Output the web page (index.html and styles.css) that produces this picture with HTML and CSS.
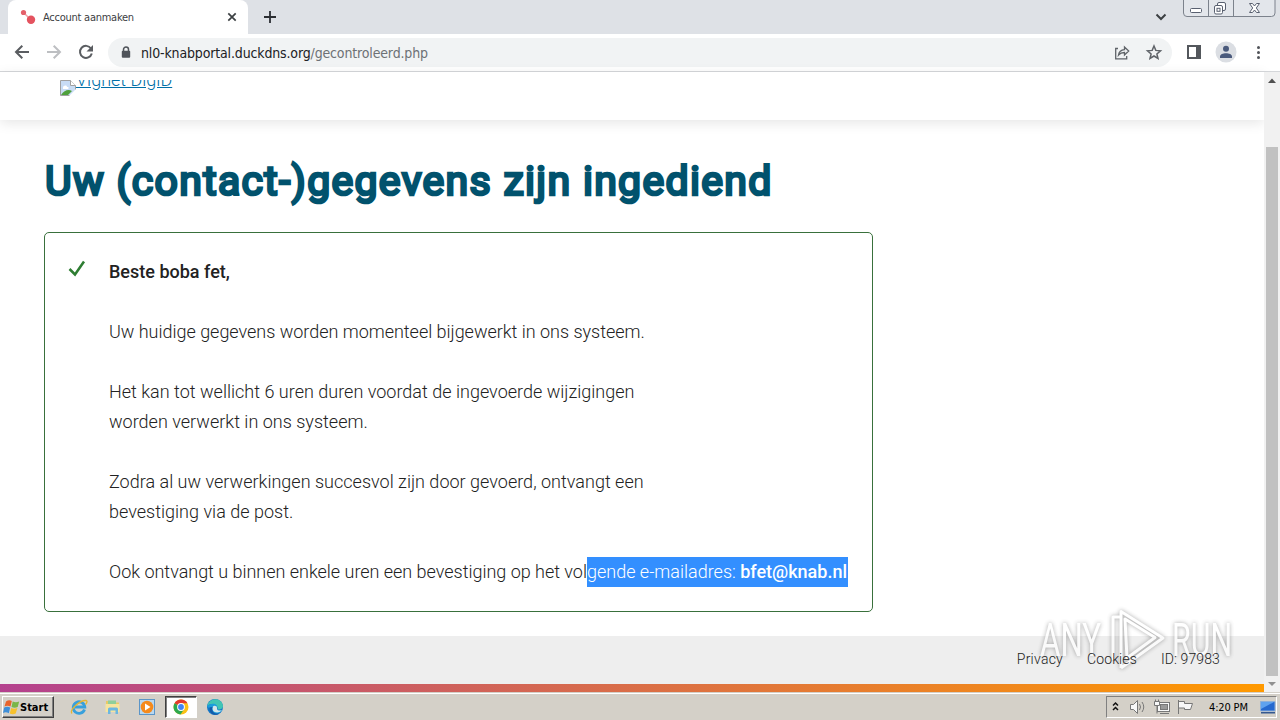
FILE: index.html
```html
<!DOCTYPE html>
<html lang="nl">
<head>
<meta charset="utf-8">
<title>Account aanmaken</title>
<link rel="stylesheet" href="styles.css">
</head>
<body>
<div class="tabstrip">
  <div class="tab">
    <svg class="favicon" width="16" height="16" viewBox="0 0 16 16"><path d="M3 3l8 8" stroke="#f0a0a6" stroke-width="1.5"/><circle cx="3.5" cy="3.5" r="2.6" fill="#e4606a"/><circle cx="11" cy="10.8" r="4.2" fill="#e4535f"/></svg>
    <span class="tab-title">Account aanmaken</span>
    <svg class="tab-close" width="10" height="10" viewBox="0 0 10 10"><path d="M1.300 1.300l7.400 7.400M8.700 1.300L1.300 8.700" stroke="#3c4043" stroke-width="1.700"/></svg>
  </div>
  <svg class="new-tab" width="12" height="12" viewBox="0 0 12 12"><path d="M6 0v12M0 6h12" stroke="#2b2e33" stroke-width="1.800"/></svg>
  <svg class="chevron" width="12" height="8" viewBox="0 0 12 8"><path d="M1.500 1.500L6 6l4.500-4.500" fill="none" stroke="#3c4043" stroke-width="2"/></svg>
  <svg class="window-buttons" width="94" height="18" viewBox="0 0 94 18"><path d="M.500 0v13q0 3.500 3.500 3.500h84.500q3.500 0 3.500-3.500V0M25.500 0v16M50.500 0v16" fill="#e3e6eb" stroke="#7c828c"/><rect x="7.500" y="8.500" width="11" height="4" rx="1" fill="#fff" stroke="#596070"/><rect x="34.500" y="2.500" width="8" height="8" rx="1.500" fill="#fff" stroke="#596070"/><rect x="31.500" y="5.500" width="8" height="8.500" rx="1.500" fill="#fff" stroke="#596070"/><rect x="34" y="8.300" width="3" height="3" fill="#fff" stroke="#596070"/><path d="M66.500 3.500h3l2 2.500 2-2.500h3l-3.200 4.500 3.200 4.500h-3l-2-2.500-2 2.500h-3l3.200-4.500z" fill="#fff" stroke="#596070"/></svg>
</div>
<div class="toolbar">
  <svg class="nav" width="104" height="37" viewBox="0 0 104 37"><g fill="none" stroke-width="2"><path d="M29 18H16.500M22.300 11.700L16 18l6.300 6.300" stroke="#5a5d61"/><path d="M47 18h12.500M53.700 11.700L60 18l-6.300 6.300" stroke="#bdbfc2"/><path d="M91 14.500a6 6 0 1 0 .800 5" stroke="#5a5d61"/></g><path d="M93 11v6.500h-6.500z" fill="#5a5d61"/></svg>
  <div class="omnibox">
    <svg width="10" height="13" viewBox="0 0 10 13"><path d="M2.500 5V3.500a2.500 2.500 0 0 1 5 0V5" fill="none" stroke="#50545a" stroke-width="1.500"/><rect x=".800" y="4.800" width="8.400" height="7" rx="1" fill="#50545a"/></svg>
    <span class="url">nl0-knabportal.duckdns.org<span class="path">/gecontroleerd.php</span></span>
    <svg class="share" width="50" height="18" viewBox="0 0 50 18"><g fill="none" stroke="#5f6368" stroke-width="1.300"><path d="M4 4.500H1.700v10.300h11V12M4.500 11c.5-3.500 2.500-5 6-5.300V3l4.200 4-4.200 4V8.500c-2.800 0-4.500.7-6 2.500z"/><path d="M40 2l1.800 4.400 4.700.4-3.600 3.100 1.100 4.600-4-2.500-4 2.500 1.100-4.600-3.600-3.100 4.700-.4z" stroke-width="1.500"/></g></svg>
  </div>
  <svg class="tools" width="92" height="37" viewBox="0 0 92 37"><rect x="2" y="12" width="12" height="12" fill="none" stroke="#53575c" stroke-width="2"/><path d="M10 11h5v14h-5z" fill="#53575c"/><circle cx="40" cy="18" r="10.500" fill="#dbdee3"/><circle cx="40" cy="14.700" r="3" fill="#4a5a7c"/><path d="M34 24v-1.500c0-4.500 12-4.500 12 0V24z" fill="#4a5a7c"/><g fill="#505358"><circle cx="72.500" cy="13.500" r="1.500"/><circle cx="72.500" cy="18.500" r="1.500"/><circle cx="72.500" cy="23.500" r="1.500"/></g></svg>
</div>
<div class="viewport">
  <div class="page">
    <header class="site-header">
      <a class="vignet"><svg width="16" height="16" viewBox="0 0 16 16"><path d="M.500.500h10l5 5v10H.500z" fill="#c8dcf5" stroke="#a0a0a0"/><path d="M10.500.500v5h5" fill="#fff" stroke="#a0a0a0"/><path d="M3 8c0-3 4-3 4-1 2-.5 2.500 2 0 2H3z" fill="#fff"/><path d="M1 15q5-7 11-4l-4 4z" fill="#4fa03c"/><path d="M9 16l7-7v7z" fill="#fff"/></svg><span>Vignet DigiD</span></a>
    </header>
    <main class="main">
      <h1>Uw (contact-)gegevens zijn ingediend</h1>
      <section class="notice">
        <svg class="check" width="18" height="18" viewBox="0 0 18 18"><path d="M1.500 9l5.500 5.500L16 1.500" fill="none" stroke="#2e7d32" stroke-width="2.500"/></svg>
        <div class="message">
          <p><b>Beste boba fet,</b></p>
          <p class="tight">Uw huidige gegevens worden momenteel bijgewerkt in ons systeem.</p>
          <p class="loose">Het kan tot wellicht 6 uren duren voordat de ingevoerde wijzigingen<br>worden verwerkt in ons systeem.</p>
          <p class="loose">Zodra al uw verwerkingen succesvol zijn door gevoerd, ontvangt een<br>bevestiging via de post.</p>
          <p class="tight">Ook ontvangt u binnen enkele uren een bevestiging op het vol<span class="selected">gende e-mailadres: <b>bfet@knab.nl</b></span></p>
        </div>
      </section>
    </main>
    <footer class="site-footer"><span class="privacy">Privacy</span><span>Cookies</span><span>ID: 97983</span></footer>
    <div class="rainbow"></div>
  </div>
  <div class="scrollbar"><svg width="16" height="16" viewBox="0 0 16 16"><path d="M4 11l4-4.500 4 4.500z" fill="#505050"/></svg><div class="thumb"></div><svg width="16" height="16" viewBox="0 0 16 16"><path d="M4 6l4 4 4-4z" fill="#909090"/></svg></div>
</div>
<div class="taskbar">
  <div class="start">
    <svg width="17" height="17" viewBox="0 0 17 17"><path d="M3 2.500q3-2 5.800-.5L7.500 7.600Q4.500 6 1.500 7.500z" fill="#e8642c"/><path d="M9.700 2.500q3 1.500 6.500 0L14.700 8q-3 1.300-6.200 0z" fill="#7ab648"/><path d="M1.200 8.500q3-1.500 6 0l-1.400 5.800Q3 12.500 0 14z" fill="#3f8fd8"/><path d="M8.200 9q3 1.300 6.200 0l-1.700 5.500q-3 1.300-5.900 0z" fill="#f6c12c"/></svg>
    <span>Start</span>
  </div>
  <div class="launchers">
    <svg width="18" height="18" viewBox="0 0 18 18"><path d="M14.500 11.500A5.800 5.800 0 1 1 14.800 9H5" fill="none" stroke="#38a0dc" stroke-width="2.800"/><path d="M2 15.500C-1 12 10 2 16 2.500c2 .5.500 3-.5 4" fill="none" stroke="#e5b532" stroke-width="1.300"/></svg>
    <svg width="18" height="18" viewBox="0 0 18 18"><path d="M2 3h5l1 1.500h7V14H2z" fill="#e9c965"/><path d="M4 2.500h8v4H4z" fill="#8fcf9a"/><path d="M1.500 6h14v8h-14z" fill="#f7e49e"/><path d="M4 16v-5q0-1.500 1.500-1.500h7q1.500 0 1.500 1.500v5h-2.500v-3.500h-5V16z" fill="#6db7e0"/></svg>
    <svg width="18" height="18" viewBox="0 0 18 18"><rect x="1.500" y="1.500" width="15" height="15" fill="#b9d8f0" stroke="#5b95c8"/><circle cx="9" cy="9" r="6.300" fill="#f58a1c"/><path d="M7 5.500v7l5.500-3.500z" fill="#fff"/></svg>
  </div>
  <div class="active-app">
    <svg width="16" height="16" viewBox="0 0 16 16"><circle cx="8" cy="8" r="7.500" fill="#fbc116"/><path d="M8 8L1.500 4.250A7.500 7.500 0 0 1 14.500 4.250H8z" fill="#e33b2e"/><path d="M8 8L1.500 4.250A7.500 7.500 0 0 0 7.500 15.500L11.250 9.900z" fill="#2da94f"/><circle cx="8" cy="8" r="3.900" fill="#fff"/><circle cx="8" cy="8" r="2.900" fill="#4285f4"/></svg>
  </div>
  <svg class="edge" width="18" height="18" viewBox="0 0 18 18"><circle cx="9" cy="9" r="8" fill="#1476c6"/><path d="M1.200 8C3-1 16-1 17 8c.3 3-3 4-5.500 3.200C12.500 7 6 4 1.200 8z" fill="#41c5b4"/><path d="M1.200 8C6 4 12.500 6 11 10c-1 1 1 3 5.500 2C12 18 4 15 6.500 9 3.500 9 2 11 1.200 8z" fill="#1b9ddc"/><path d="M7 8.500c-2 4 2 7 6.500 5.500l3-2c-3 1.200-6 .5-5.500-2 .3-2-3-3-4-1.500z" fill="#d4e6ea"/><path d="M6.500 9c-1.500 4 2 8 7 6.500C9 19 2 15 4 9.500z" fill="#145ba8"/></svg>
  <div class="tray">
    <svg width="80" height="18" viewBox="0 0 80 18"><path d="M3 7.500L5.500 5 8 7.500M3 12l2.500-2.500L8 12" fill="none" stroke="#111" stroke-width="1.500"/><g fill="#f8f8f8" stroke="#777"><path d="M20.500 6.500h3l4-4v13l-4-4h-3z"/><path d="M29.500 6q2 3 0 6M32 4q3.500 5 0 10" fill="none"/><rect x="47.500" y="4.500" width="12" height="9"/><path d="M50 15.500h9M44.500 3.500h5v4h-5zM47 7.500v8M45.500 1.500v2M48.500 1.500v2"/><rect x="50.500" y="6.500" width="7" height="5" fill="#999"/><path d="M68.500 2v14M68.500 3.500h6v2h8l-2 6h-6v-1.500h-6z"/></g></svg>
    <span class="clock">4:20 PM</span>
    <svg class="desktop-icon" width="16" height="15" viewBox="0 0 16 15"><path d="M.500 1.500h14.500v9.500H.500z" fill="#2669cf" stroke="#8fb0d8"/><path d="M1 2h13L1 9z" fill="#5fa2ef"/><path d="M1 12h14v1.500H1z" fill="#35588f"/></svg>
  </div>
</div>
<div class="watermark">
  <span class="mark-left">ANY</span>
  <svg width="62" height="66" viewBox="0 0 62 66"><g fill="none" stroke="#fff" stroke-width="3" stroke-linejoin="round"><path d="M15 60V3.500L57 30 15 60M19 11l30 18.500L21 50z"/><path d="M14 9H7v43"/></g></svg>
  <span class="mark-right">RUN</span>
</div>
</body>
</html>
```
FILE: styles.css
```css
*{box-sizing:border-box}
body{margin:0;width:1280px;height:720px;overflow:hidden;background:#fff;font-family:Roboto,"Liberation Sans",sans-serif;display:flex;flex-direction:column;position:relative}
svg{display:block;flex:none}
.tabstrip{height:34px;background:#dee1e6;display:flex;align-items:flex-start;padding-left:8px}
.tab{width:240px;height:34px;background:#fff;border-radius:8px 8px 0 0;display:flex;align-items:center;padding:0 11px 0 12px}
.tab-title{font:11px "DejaVu Sans Condensed","DejaVu Sans",sans-serif;letter-spacing:-.25px;color:#3c4043;margin-left:7px;flex:1;white-space:nowrap}
.new-tab{margin:11px 0 0 16px}
.chevron{margin:13px 16px 0 auto}
.window-buttons{margin-right:3px}
.toolbar{height:38px;border-bottom:1px solid #d5d7da;display:flex}
.omnibox{width:1064px;height:29px;margin-top:4px;margin-left:4px;border-radius:15px;background:#f1f3f4;display:flex;align-items:center;padding:0 8px 0 13px}
.url{font:14px "DejaVu Sans Condensed","DejaVu Sans",sans-serif;letter-spacing:-.15px;color:#202124;margin-left:10px;flex:1;white-space:nowrap}
.path{color:#6d7175}
.tools{margin-left:14px}
.viewport{height:620px;display:flex}
.page{width:1264px;display:flex;flex-direction:column;background:linear-gradient(#eee,#eee) 0 564px/100% 48px no-repeat}
.site-header{height:48px;padding:8px 60px 0;box-shadow:0 3px 12px rgba(0,0,0,.1)}
.vignet{display:flex;height:17px;overflow:hidden;font-weight:300;font-size:18px;color:#006fa8;text-decoration:underline}
.vignet span{margin-top:-11px;line-height:21px}
.main{height:516px;padding:32px 44px 0}
h1{margin:0 0 0 1px;font-size:41px;line-height:58px;font-weight:400;letter-spacing:1.3px;color:#01526d;-webkit-text-stroke:2.7px #01526d;stroke-linejoin:round;white-space:nowrap}
.notice{margin-top:22px;width:829px;height:380px;border:1px solid #39703c;border-radius:5px;padding:24px 23px;display:flex}
.check{margin-top:3px}
.message{margin-left:23px;font-size:18px;line-height:30px;font-weight:300;color:#222;white-space:nowrap}
.message p{margin:0 0 30px}
.message .tight{letter-spacing:-.02px}
.message .loose{letter-spacing:.01px}
.message b{font-weight:500}
.selected{background:#338fff;color:#fff;display:inline-block;letter-spacing:0;padding-right:1px}
.site-footer{position:relative;z-index:2;height:48px;display:flex;justify-content:flex-end;gap:24px;padding:0 44px;line-height:46px;font-size:14px;font-weight:300;color:#222;letter-spacing:.11px}
.privacy{letter-spacing:.25px}
.rainbow{height:8px;background:linear-gradient(90deg,#b4418e,#ff9900)}
.scrollbar{width:16px;background:#f1f1f1;display:flex;flex-direction:column}
.thumb{margin:59px 2px 0;height:529px;background:#c1c1c1}
.taskbar{height:28px;background:#d4d0c8;border-top:1px solid #d4d0c8;box-shadow:inset 0 1px #fff;display:flex;align-items:flex-start;padding:3px 2px 0}
.start{width:52px;height:22px;border:1px solid;border-color:#fff #404040 #404040 #fff;box-shadow:inset -1px -1px #808080;display:flex;align-items:center;font:bold 11px "DejaVu Sans Condensed","DejaVu Sans",sans-serif;color:#000}
.launchers{display:flex;gap:16px;margin:2px 0 0 16px}
.active-app{width:32px;height:22px;margin-left:9px;background:#fff;border:1px solid;border-color:#404040 #fff #fff #404040;box-shadow:inset 1px 1px #808080;display:grid;place-items:center}
.edge{margin:2px 0 0 9px}
.tray{margin-left:auto;margin-right:1px;width:171px;height:22px;border:1px solid;border-color:#808080 #fff #fff #808080;display:flex;align-items:center;padding-left:3px}
.tray svg{overflow:visible}
.clock{font:11px "DejaVu Sans Condensed","DejaVu Sans",sans-serif;letter-spacing:-.15px;color:#000;margin-left:19px;width:40px;white-space:nowrap}
.desktop-icon{margin-left:11px}
.watermark{position:absolute;z-index:1;left:1040px;top:608px;width:194px;height:66px;display:flex;justify-content:space-between;align-items:flex-start;filter:drop-shadow(0 0 2px rgba(60,60,60,.6));opacity:.75;color:#fff;font-weight:400;font-size:46px;line-height:64px}
.mark-left{width:62px;transform:scaleX(.68);transform-origin:left}
.mark-right{width:62px;transform:scaleX(.66);transform-origin:left}
```
